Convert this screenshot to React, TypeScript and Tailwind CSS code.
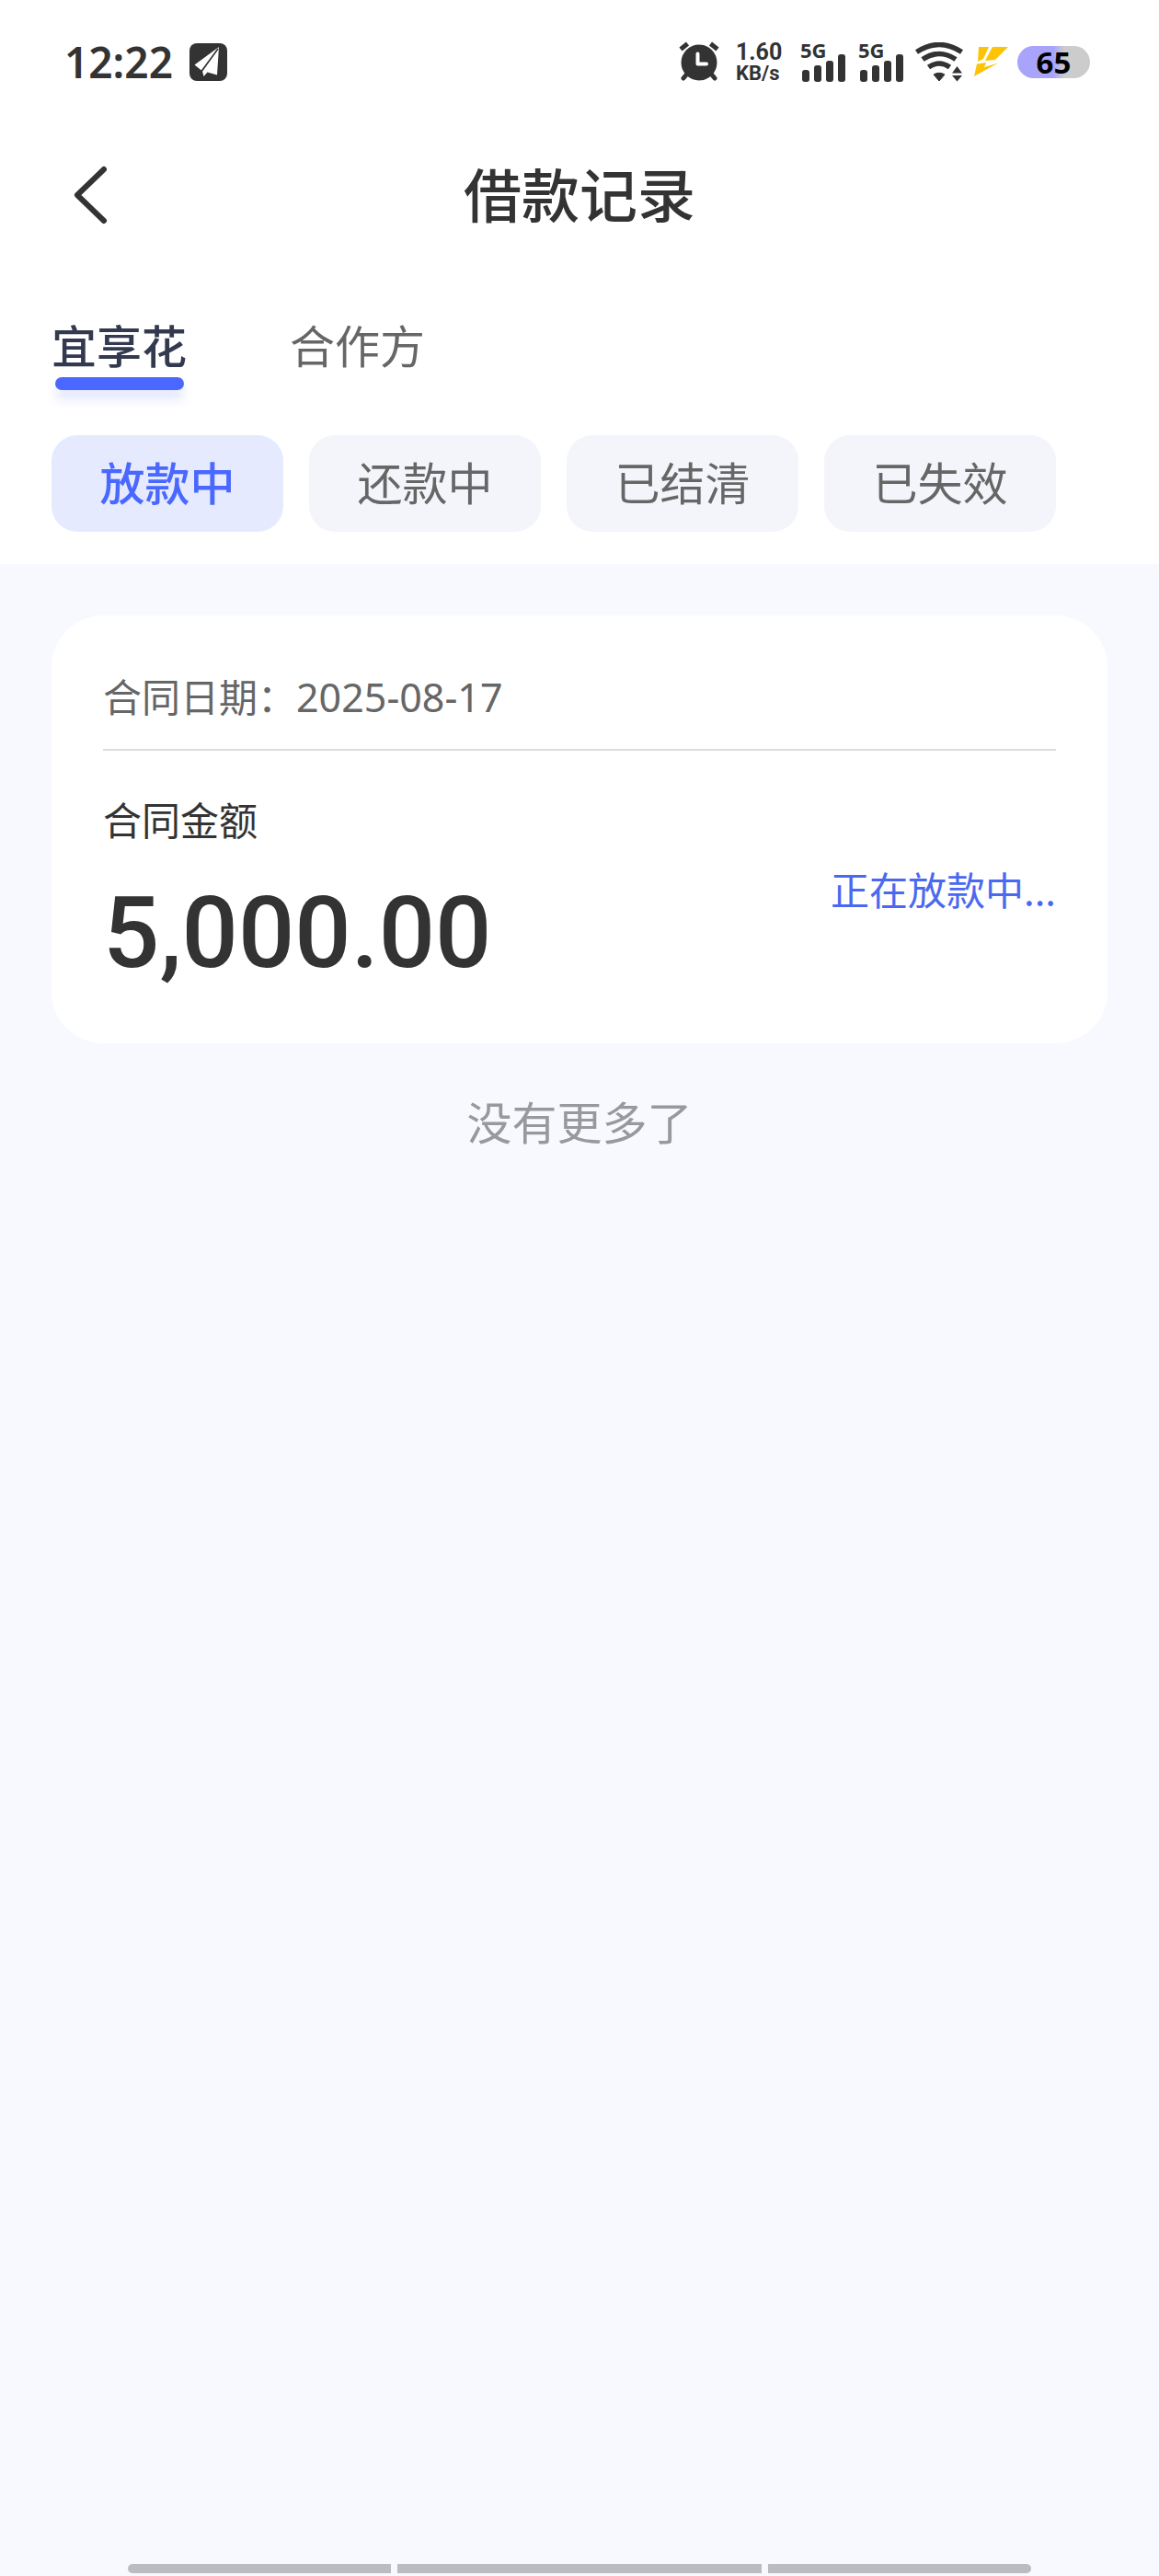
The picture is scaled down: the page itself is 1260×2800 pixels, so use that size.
import React, { useState } from "react"
import { clsx } from "clsx"

const tabs = ["宜享花", "合作方"]
const filters = ["放款中", "还款中", "已结清", "已失效"]

function SignalBars() {
  return (
    <div className="flex w-[52px] flex-col items-start">
      <span className="text-[22px] leading-[18px] font-bold">5G</span>
      <svg width="48" height="30" viewBox="0 0 48 30" fill="#333" className="ml-0.5 -mt-1">
        <rect x="0" y="17" width="8" height="13" rx="3" />
        <rect x="13" y="12" width="8" height="18" rx="3" />
        <rect x="26" y="7" width="8" height="23" rx="3" />
        <rect x="39" y="0" width="8" height="30" rx="3" />
      </svg>
    </div>
  )
}

function AlarmIcon() {
  return (
    <svg width="44" height="44" viewBox="0 0 44 44" fill="none" stroke="#333" strokeLinecap="round">
      <path d="M2 8.500 9.500 2.500M42 8.500 34.500 2.500" strokeWidth="5" strokeLinecap="butt" />
      <path d="M10 34 5 40M34 34 39 40" strokeWidth="5" />
      <circle cx="22" cy="23" r="19.500" fill="#333" stroke="none" />
      <path d="M20.500 13.500V24.500H30" stroke="#fff" strokeWidth="4" strokeLinejoin="round" />
    </svg>
  )
}

function WifiIcon() {
  return (
    <svg width="52" height="43" viewBox="0 0 52 43" fill="none" stroke="#333">
      <path d="M1.500 10.500Q26 -5.500 50.500 10.500" strokeWidth="5.500" />
      <path d="M8 18.500Q26 6.500 44 18.500" strokeWidth="5.500" />
      <path d="M14.500 27Q26 19 37.500 27" strokeWidth="5.500" />
      <path d="M20 35Q26 31.500 32 35L26 42Z" fill="#333" strokeWidth="1" />
      <path d="M40 33.500 45.500 26 51 33.500ZM40 36 45.500 42.500 51 36Z" fill="#333" stroke="none" />
    </svg>
  )
}

function StatusBar() {
  return (
    <div className="flex h-[134px] items-center justify-between pl-[70px] pr-[75px] font-['Noto_Sans',sans-serif] text-[#333]">
      <div className="flex items-center gap-[18px]">
        <span className="text-[46px] leading-[52px] font-semibold">12:22</span>
        <svg width="41" height="41" viewBox="0 0 41 41">
          <rect width="41" height="41" rx="8" fill="#333" />
          <path d="M32 4 5.500 23.500 13 29.500Z" fill="#fff" />
          <path d="M32 4 14 30.500 15.500 36 19.500 31.500 30 34.500Z" fill="#fff" />
          <path d="M31 6 13.500 30" stroke="#333" strokeWidth="1.500" />
        </svg>
      </div>
      <div className="flex items-center">
        <AlarmIcon />
        <div className="ml-[18px] flex w-[52px] flex-col font-[Roboto,sans-serif] font-bold">
          <span className="text-[25px] leading-[25px]">1.60</span>
          <span className="text-[22px] leading-[22px]">KB/s</span>
        </div>
        <div className="ml-[18px] flex gap-[11px]">
          <SignalBars />
          <SignalBars />
        </div>
        <div className="ml-[10px]">
          <WifiIcon />
        </div>
        <svg width="37" height="32" viewBox="0 0 37 32" fill="#fdc307" className="ml-3">
          <path d="M5 0H16L10 13 4 16Z" />
          <path d="M20 0H37L23 14 12 15Z" />
          <path d="M3 18.500 13 17 11 22 26 17.500 0 32Z" />
        </svg>
        <div className="ml-[10px] flex h-[35px] w-[79px] items-center justify-center rounded-full bg-linear-to-r from-[#a8a4fb] from-50% to-[#cccccc] to-65% text-[33px] leading-[35px] font-bold text-black">
          65
        </div>
      </div>
    </div>
  )
}

export default function App() {
  const [tab, setTab] = useState(tabs[0])
  const [filter, setFilter] = useState(filters[0])

  return (
    <div className="flex min-h-screen flex-col bg-[#f7f9fe] font-['Noto_Sans_CJK_SC',sans-serif] text-[#333]">
      <header className="bg-white pb-[35px]">
        <StatusBar />

        <div className="grid h-[156px] grid-cols-[1fr_auto_1fr] items-center">
          <button aria-label="返回" className="justify-self-start pl-[80px]">
            <svg width="37" height="64" viewBox="0 0 37 64" fill="none" stroke="#333" strokeWidth="6" strokeLinecap="round" strokeLinejoin="round">
              <path d="M33 4 4 32 33 60" />
            </svg>
          </button>
          <h1 className="pb-1.5 text-[63px] leading-[80px] font-medium">借款记录</h1>
        </div>

        <nav className="flex items-start gap-28 px-14 pt-[54px]">
          {tabs.map((name) => (
            <button
              key={name}
              onClick={() => setTab(name)}
              className={clsx(
                "flex flex-col items-center gap-1.5 text-[49px] leading-[60px]",
                tab === name ? "font-medium text-[#333a50]" : "text-[#666]"
              )}
            >
              {name}
              {tab === name && (
                <span className="h-[14px] w-[140px] rounded-full bg-[#4a68ff] shadow-[0_10px_12px_rgba(74,104,255,0.16)]" />
              )}
            </button>
          ))}
        </nav>

        <div className="mt-[49px] flex gap-7 px-14">
          {filters.map((name) => (
            <button
              key={name}
              onClick={() => setFilter(name)}
              className={clsx(
                "h-[105px] w-[252px] rounded-[28px] pb-1.5 text-[49px] leading-[60px]",
                filter === name ? "bg-[#e5eaff] font-medium text-[#4a68ff]" : "bg-[#f4f5fb] text-[#666]"
              )}
            >
              {name}
            </button>
          ))}
        </div>
      </header>

      <main className="px-14 pt-14">
        <section className="rounded-[56px] bg-white px-14 pt-[61px] pb-[66px]">
          <div className="flex items-baseline border-b-2 border-[#dcdcdc] pb-[30px] text-[42px] leading-[52px] text-[#666]">
            <span>合同日期：</span>
            <span className="font-['Noto_Sans',sans-serif] text-[43px]">2025-08-17</span>
          </div>
          <div className="flex items-center justify-between pt-12">
            <div>
              <p className="text-[42px] leading-[52px]">合同金额</p>
              <p className="mt-11 font-[Roboto,sans-serif] text-[108px] leading-[108px] font-medium">5,000.00</p>
            </div>
            <span className="text-[42px] leading-[52px] text-[#4a68f0]">正在放款中...</span>
          </div>
        </section>
        <p className="mt-[54px] text-center text-[49px] leading-[60px] text-[#97999e]">没有更多了</p>
      </main>

      {/* System navigation handle */}
      <footer className="mt-auto flex gap-[7px] px-[139px] pb-[3px]">
        <div className="h-[10px] flex-[286] rounded-l-full bg-[#babcc1]" />
        <div className="h-[10px] flex-[396] bg-[#babcc1]" />
        <div className="h-[10px] flex-[286] rounded-r-full bg-[#babcc1]" />
      </footer>
    </div>
  )
}
